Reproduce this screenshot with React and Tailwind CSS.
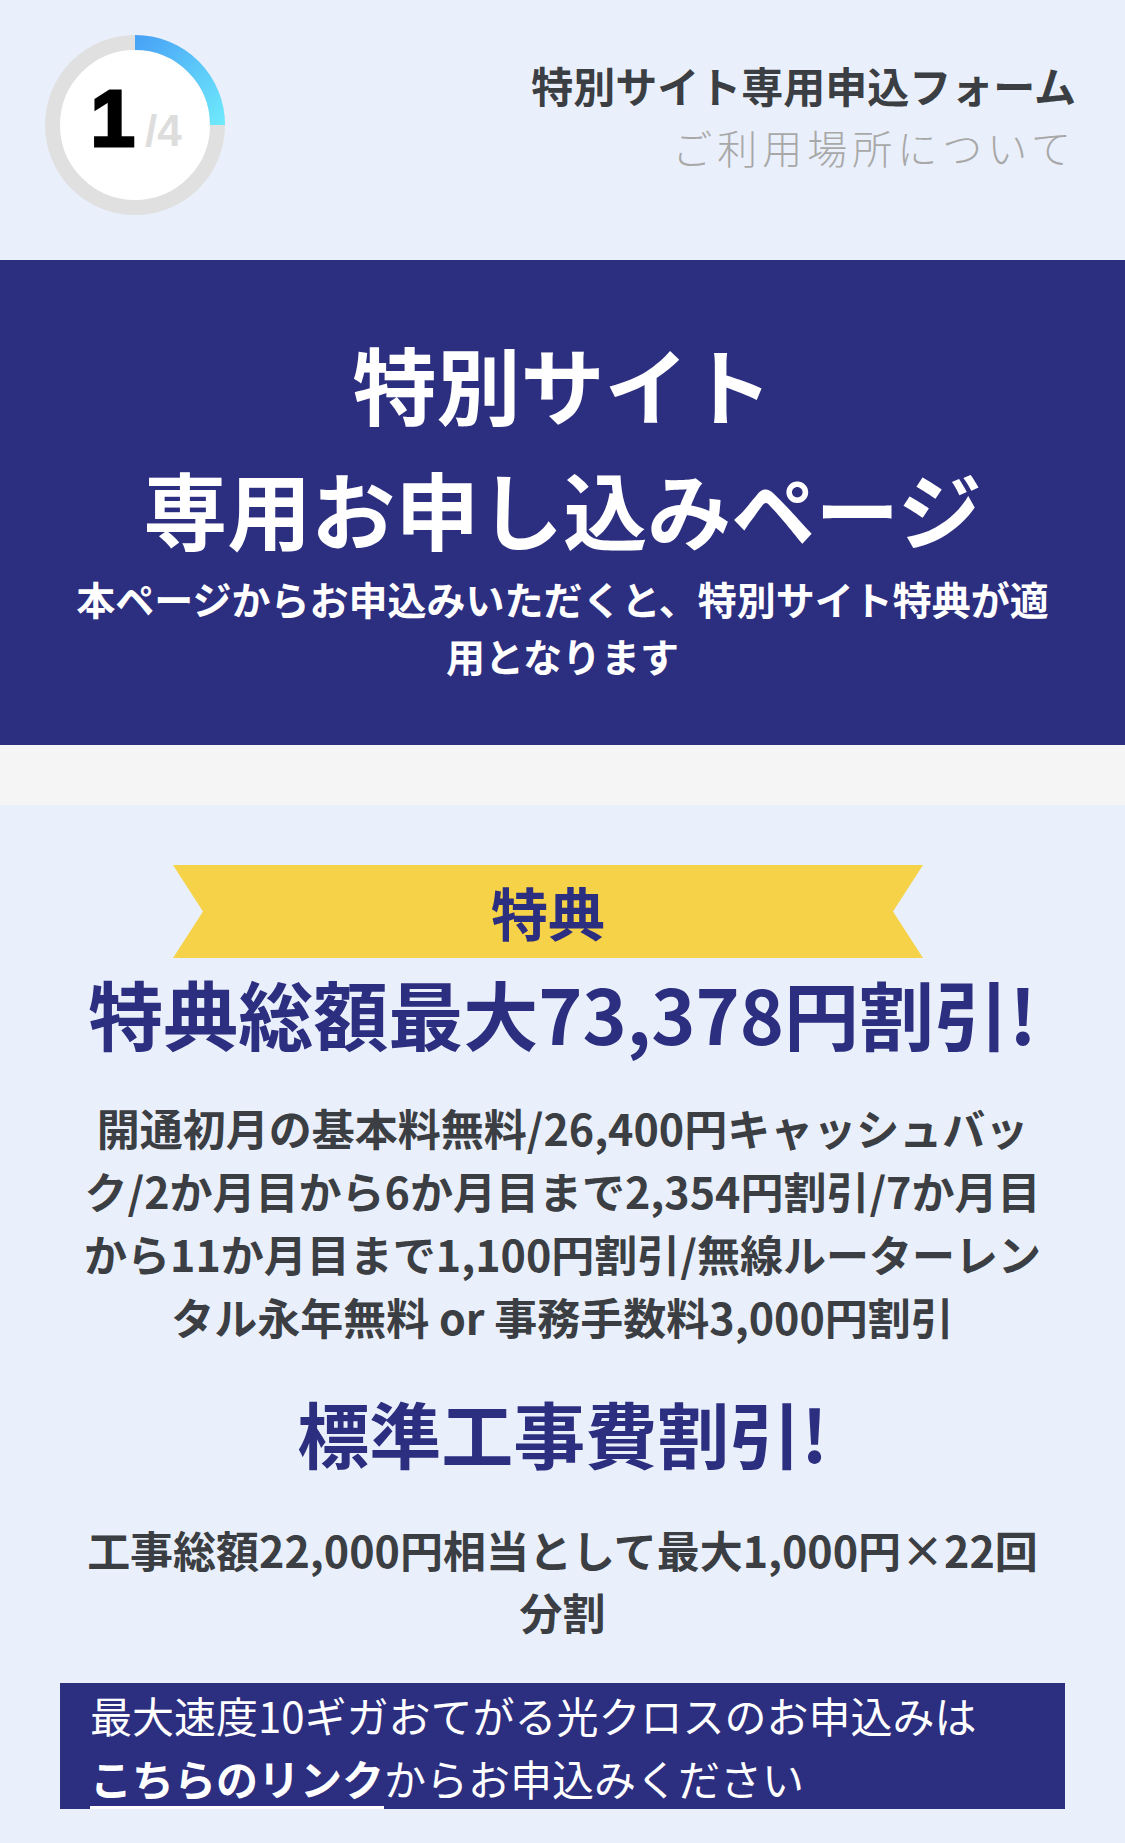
import React from 'react';

const jp = { fontFamily: '"Noto Sans CJK JP", "Noto Sans", sans-serif' };

const StepRing = ({ current, total }) => {
  return (
    <div className="relative w-[180px] h-[180px] shrink-0">
      <svg width="180" height="180" viewBox="0 0 180 180">
        <defs>
          <linearGradient id="ringGrad" x1="0" y1="0" x2="1" y2="1">
            <stop offset="0%" stopColor="#47a3f6" />
            <stop offset="100%" stopColor="#6ee8fb" />
          </linearGradient>
        </defs>
        <circle cx="90" cy="90" r="82.5" fill="#ffffff" stroke="#e0e0e0" strokeWidth="15" />
        <path d="M 90 7.5 A 82.5 82.5 0 0 1 172.5 90" fill="none" stroke="url(#ringGrad)" strokeWidth="15" />
      </svg>
      <div
        className="absolute inset-0 flex items-baseline justify-center pt-[44px] pl-[2px]"
        style={{ fontFamily: '"Liberation Sans", Arial, sans-serif' }}
      >
        <span className="text-[80px] leading-none font-bold text-black [-webkit-text-stroke:3px_#000]">{current}</span>
        <span className="text-[44px] leading-none font-bold text-[#dddddd] ml-[10px]">/{total}</span>
      </div>
    </div>
  );
};

export default function App() {
  return (
    <div className="w-[1125px] min-h-[1843px] bg-[#eaf0fb]" style={jp}>
      {/* header */}
      <div className="h-[260px] flex justify-between pt-[35px] pl-[45px] pr-[49px]">
        <StepRing current={1} total={4} />
        <div className="text-right mt-[18px]">
          <div className="text-[42px] leading-[63px] font-bold text-[#3b3e42]">特別サイト専用申込フォーム</div>
          <div className="text-[40px] leading-[63px] font-light tracking-[5px] text-[#a8a8a8]">ご利用場所について</div>
        </div>
      </div>

      {/* title band */}
      <div className="bg-[#2c2e80] text-white text-center pt-[60px] pb-[61px] px-[60px]">
        <h1 className="text-[84px] leading-[125px] font-bold">
          特別サイト
          <br />
          専用お申し込みページ
        </h1>
        <p className="text-[39px] leading-[57px] font-bold">
          本ページからお申込みいただくと、特別サイト特典が適
          <br />
          用となります
        </p>
      </div>

      <div className="h-[60px] bg-[#f5f5f5]" />

      {/* benefits */}
      <div className="pt-[60px] pb-[32px]">
        <div className="ml-[173px] w-[750px] h-[93px] bg-[#f5d247] flex items-center justify-center [clip-path:polygon(0_0,100%_0,calc(100%-30px)_50%,100%_100%,0_100%,30px_50%)]">
          <span className="text-[57px] leading-none font-bold text-[#2c2e80]">特典</span>
        </div>

        <h2 className="text-center text-[75px] leading-[110px] font-bold text-[#2c2e80]">
          特典総額最大73,378円割引!
        </h2>

        <p className="mt-[28px] px-[60px] text-center text-[43px] leading-[63px] font-bold text-[#3b3e42]">
          開通初月の基本料無料/26,400円キャッシュバッ
          <br />
          ク/2か月目から6か月目まで2,354円割引/7か月目
          <br />
          から11か月目まで1,100円割引/無線ルーターレン
          <br />
          タル永年無料 or 事務手数料3,000円割引
        </p>

        <h2 className="mt-[30px] text-center text-[72px] leading-[108px] font-bold text-[#2c2e80]">
          標準工事費割引!
        </h2>

        <p className="mt-[32px] px-[60px] text-center text-[43px] leading-[62px] font-bold text-[#3b3e42]">
          工事総額22,000円相当として最大1,000円×22回
          <br />
          分割
        </p>

        <div className="mt-[41px] mx-[60px] bg-[#2c2e80] text-white pl-[30px] pr-[20px] text-[42px] leading-[63px]">
          最大速度10ギガおてがる光クロスのお申込みは
          <br />
          <a href="#" className="font-bold underline decoration-[3px] underline-offset-[10px]">
            こちらのリンク
          </a>
          からお申込みください
        </div>
      </div>
    </div>
  );
}
